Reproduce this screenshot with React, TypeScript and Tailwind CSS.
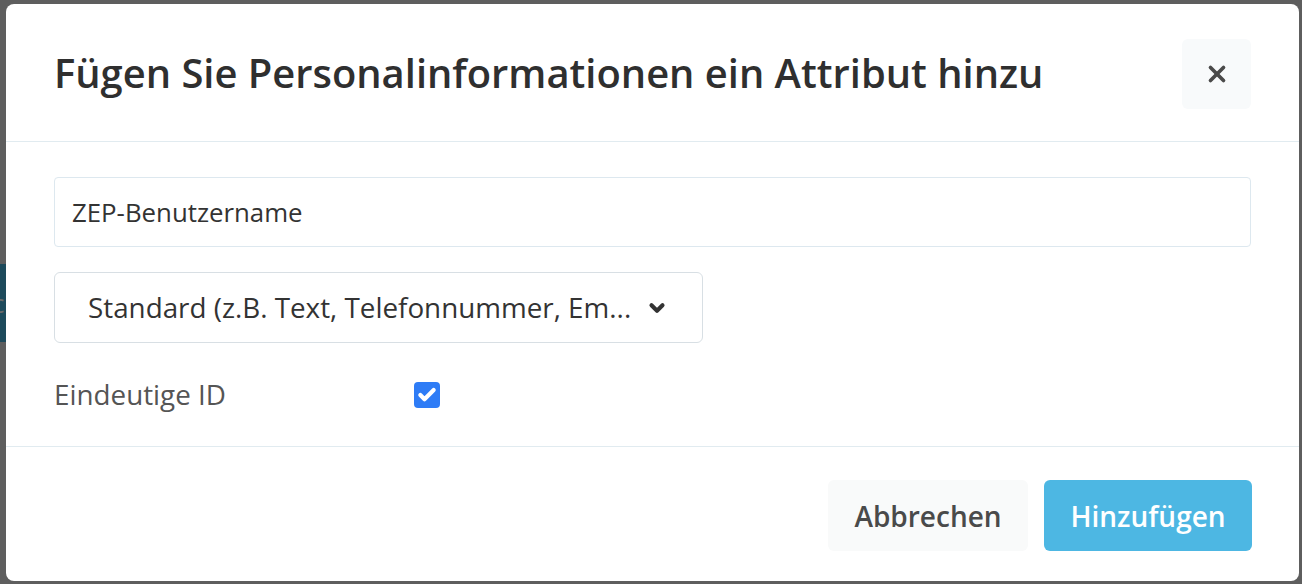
import { X, ChevronDown, Check } from "lucide-react";

const font = { fontFamily: '"Open Sans", "Noto Sans", sans-serif' };

export default function App() {
  return (
    <div className="relative w-[1302px] h-[584px] overflow-hidden bg-[#5e5e5e]" style={font}>
      {/* page behind the overlay */}
      <div className="absolute inset-0 flex flex-col">
        <div className="h-[84px]" />
        <div className="ml-[-14px] text-[26px] leading-[40px] text-[#1f1f1f]">e</div>
        <div className="h-[140px]" />
        <div className="h-[78px] w-[20px] bg-[#1d4a5b] flex items-center">
          <span className="ml-[-8px] text-[26px] text-[#6a6a6a]">c</span>
        </div>
        <div className="h-[135px]" />
        <div className="ml-[-14px] text-[26px] leading-[40px] text-[#1f1f1f]">e</div>
      </div>

      {/* modal */}
      <div className="relative ml-[6px] mt-[4px] w-[1293px] h-[577px] rounded-[8px] bg-white flex flex-col">
        <div className="h-[138px] shrink-0 flex items-center justify-between pl-[48px] pr-[48px] border-b border-[#e1ebf0]">
          <h1 className="text-[39.9px] font-semibold text-[#2f2f2f]">
            Fügen Sie Personalinformationen ein Attribut hinzu
          </h1>
          <button className="w-[69px] h-[70px] rounded-[6px] bg-[#f8fafb] flex items-center justify-center mt-[2px]">
            <X size={26} strokeWidth={3.4} className="text-[#4a4a4a]" />
          </button>
        </div>

        <div className="flex flex-col px-[48px] pt-[35px] h-[305px] border-b border-[#e1ebf0] shrink-0">
          <div className="h-[70px] rounded-[4px] border border-[#dde8ef] flex items-center px-[17px]">
            <span className="text-[25.8px] text-[#333333]">ZEP-Benutzername</span>
          </div>
          <div className="mt-[25px] w-[649px] h-[71px] rounded-[6px] border border-[#d8dfe4] flex items-center pl-[33px] pr-[34px] justify-between">
            <span className="text-[27.8px] text-[#333333]">Standard (z.B. Text, Telefonnummer, Em...</span>
            <ChevronDown size={22} strokeWidth={4.5} className="text-[#333333]" />
          </div>
          <div className="mt-[38px] flex items-center h-[28px]">
            <span className="w-[360px] text-[27.8px] text-[#555555]">Eindeutige ID</span>
            <span className="w-[26px] h-[26px] rounded-[4px] bg-[#2e7cf6] flex items-center justify-center">
              <Check size={20} strokeWidth={5} className="text-white" />
            </span>
          </div>
        </div>

        <div className="flex justify-end items-start gap-[16px] pr-[47px] pt-[33px]">
          <button className="w-[200px] h-[71px] rounded-[6px] bg-[#f9fafa] text-[28px] font-semibold text-[#4a4a4a]">
            Abbrechen
          </button>
          <button className="w-[208px] h-[71px] rounded-[6px] bg-[#4db7e3] text-[28px] font-semibold text-white">
            Hinzufügen
          </button>
        </div>
      </div>
    </div>
  );
}
